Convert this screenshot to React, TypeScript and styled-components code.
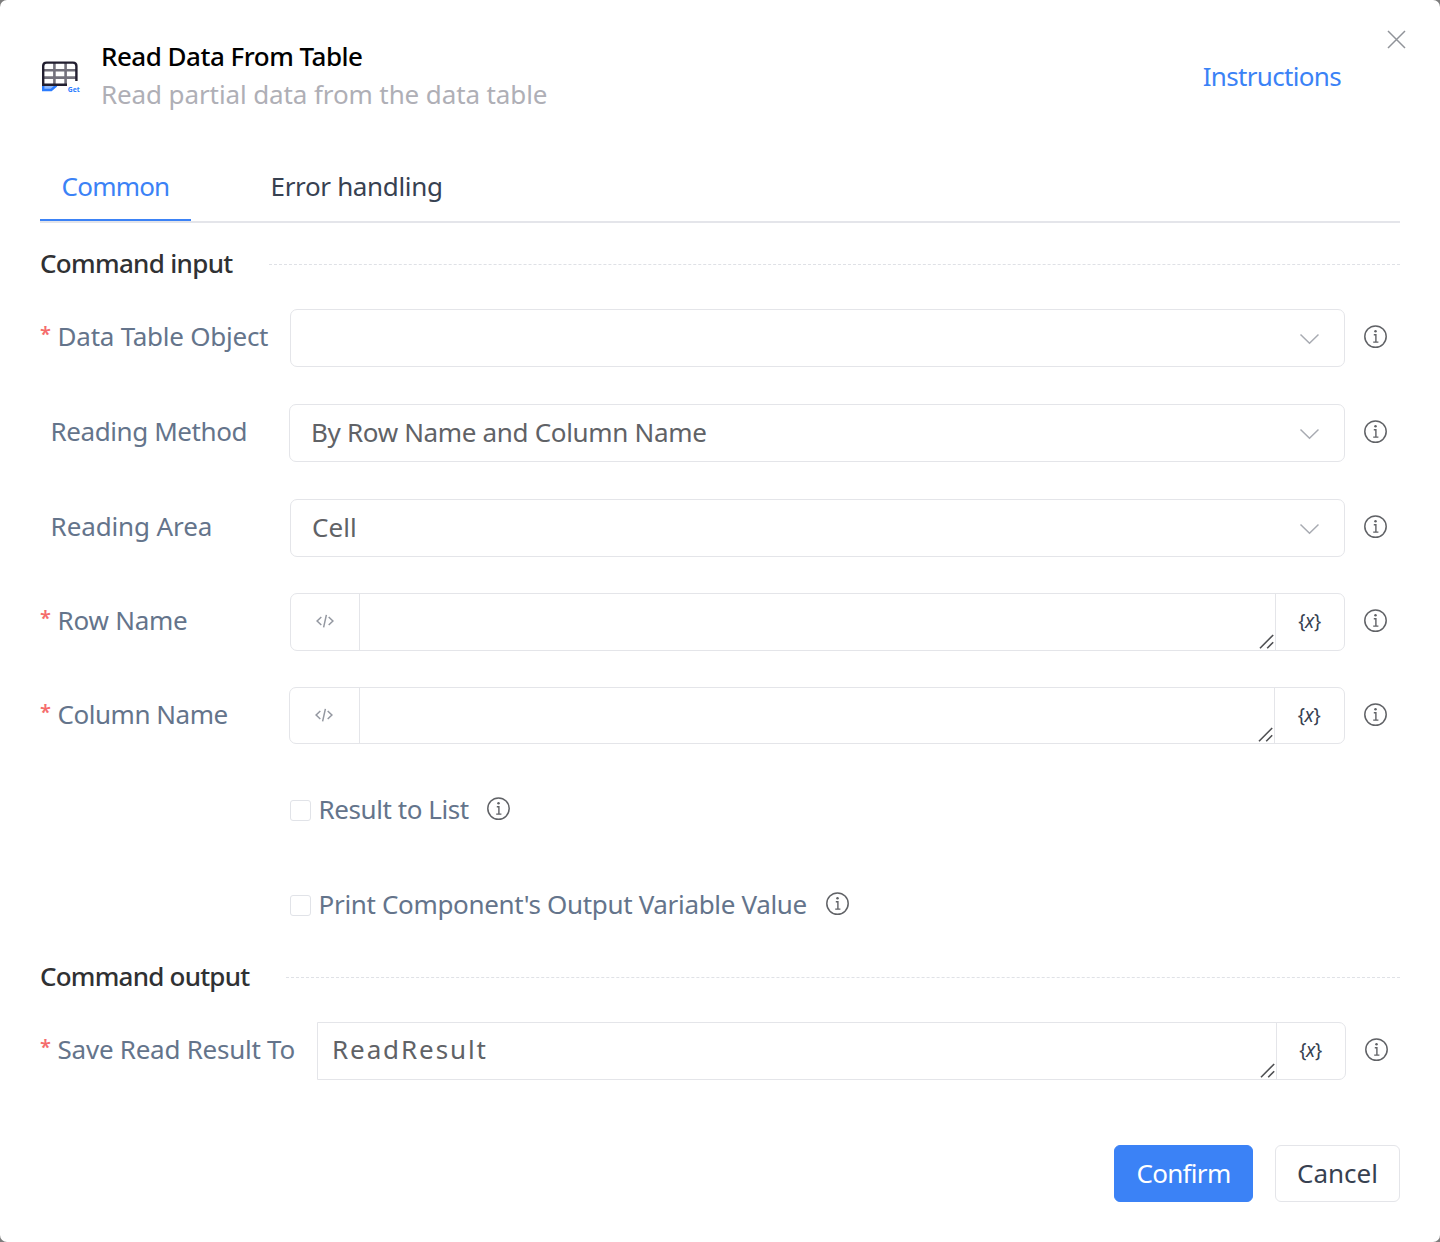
import React, { useState } from "react";
import styled, { createGlobalStyle } from "styled-components";

const GlobalStyle = createGlobalStyle`
  * { box-sizing: border-box; }
  body {
    margin: 0;
    background: #7d7d7d;
    font-family: "Noto Sans", "Open Sans", sans-serif;
    font-size: 26px;
  }
  button, textarea { font-family: inherit; font-size: inherit; }
`;

const Dialog = styled.div`
  position: relative;
  display: flex;
  flex-direction: column;
  width: 1440px;
  height: 1242px;
  padding: 37px 40px 0;
  background: #fff;
  border-radius: 7px;
`;

const Header = styled.header`
  display: flex;
  align-items: flex-start;
  height: 76px;
`;

const HeaderIcon = styled.svg`
  flex: none;
  width: 44px;
  height: 40px;
  margin: 21px 16px 0 0;
`;

const Titles = styled.div`
  flex: 1;
  padding-left: 1px;
  line-height: 38px;
`;

const Title = styled.h1`
  margin: 0;
  font-size: 26px;
  font-weight: 500;
  letter-spacing: -0.5px;
  color: #000;
`;

const Subtitle = styled.p`
  margin: 0;
  letter-spacing: -0.11px;
  color: #afafb6;
`;

const HelpLink = styled.a`
  margin: 20px 59px 0 0;
  line-height: 38px;
  letter-spacing: -0.67px;
  color: #3b82f6;
  text-decoration: none;
`;

const CloseButton = styled.button`
  position: absolute;
  top: 30px;
  right: 34px;
  display: flex;
  padding: 0;
  border: 0;
  background: none;
  color: #909399;
`;

const Tabs = styled.nav`
  display: flex;
  gap: 58px;
  height: 72px;
  margin-top: 38px;
  border-bottom: 2px solid #e4e5ea;
`;

const Tab = styled.button<{ $active?: boolean; $spacing: number }>`
  height: 70px;
  padding: 2px 21px 0 21.6px;
  border: 0;
  border-bottom: 2px solid ${(p) => (p.$active ? "#3b82f6" : "transparent")};
  background: none;
  line-height: 66px;
  letter-spacing: ${(p) => p.$spacing}px;
  color: ${(p) => (p.$active ? "#3b82f6" : "#374151")};
  min-width: 151px;
  text-align: left;
`;

const SectionHead = styled.div<{ $top: number; $titleWidth: number }>`
  display: grid;
  grid-template-columns: ${(p) => p.$titleWidth}px 1fr;
  align-items: center;
  height: 38px;
  margin: ${(p) => p.$top}px 0 27px;
`;

const SectionTitle = styled.h2<{ $spacing: number }>`
  margin: 0;
  font-size: 26px;
  font-weight: 500;
  line-height: 38px;
  letter-spacing: ${(p) => p.$spacing}px;
  color: #303133;
  white-space: nowrap;
`;

const Rule = styled.div`
  margin-top: 2px;
  border-top: 1px dashed #dfe1e6;
`;

const Row = styled.div<{ $gap?: number; $height?: number }>`
  display: flex;
  height: ${(p) => p.$height ?? 58}px;
  margin-top: ${(p) => p.$gap ?? 0}px;
`;

const Label = styled.label<{ $width: number; $indent?: number; $spacing: number }>`
  display: flex;
  flex: none;
  width: ${(p) => p.$width}px;
  padding-left: ${(p) => p.$indent ?? 0}px;
  height: 38px;
  margin-top: 8px;
  line-height: 38px;
  letter-spacing: ${(p) => p.$spacing}px;
  color: #64748b;
  white-space: nowrap;
`;

const Star = styled.span`
  flex: none;
  width: 17.6px;
  font-size: 20px;
  font-weight: 600;
  line-height: 34px;
  color: #f56c6c;
`;

const SelectBox = styled.div<{ $spacing: number }>`
  display: flex;
  flex: 1;
  align-items: center;
  justify-content: space-between;
  padding: 0 25px 2px 21px;
  border: 1px solid #e4e5e9;
  border-radius: 7px;
  letter-spacing: ${(p) => p.$spacing}px;
  color: #606266;
`;

const ChevronSvg = styled.svg`
  width: 20px;
  height: 12px;
  margin-top: 3px;
`;

const InputGroup = styled.div<{ $squareLeft?: boolean }>`
  display: flex;
  flex: 1;
  border: 1px solid #e4e5e9;
  border-radius: ${(p) => (p.$squareLeft ? "0 7px 7px 0" : "7px")};
`;

const Addon = styled.div<{ $side: "left" | "right"; $width?: number }>`
  display: flex;
  flex: none;
  align-items: center;
  justify-content: center;
  width: ${(p) => p.$width ?? 69}px;
  padding: 0 1px 2px 0;
  ${(p) => (p.$side === "left" ? "border-right" : "border-left")}: 1px solid #e4e5e9;
`;

const FieldArea = styled.div`
  position: relative;
  display: flex;
  flex: 1;
`;

const Field = styled.textarea`
  flex: 1;
  padding: 7px 14px;
  border: 0;
  outline: 0;
  resize: none;
  overflow: hidden;
  background: transparent;
  line-height: 38px;
  letter-spacing: 1.9px;
  color: #606266;
`;

const Grip = styled.svg`
  position: absolute;
  right: 1.5px;
  bottom: 1px;
  width: 15px;
  height: 15px;
`;

const Braces = styled.span`
  font-size: 19px;
  line-height: 24px;
  letter-spacing: -0.3px;
  color: #374151;
`;

const InfoSvg = styled.svg<{ $top: number }>`
  flex: none;
  width: 24px;
  height: 24px;
  margin: ${(p) => p.$top}px 0 0 19px;
`;

const InfoSpace = styled.div<{ $width: number }>`
  flex: none;
  width: ${(p) => p.$width}px;
`;

const CheckRow = styled.div<{ $gap: number }>`
  display: flex;
  height: 38px;
  margin: ${(p) => p.$gap}px 0 0 250px;
`;

const CheckBox = styled.button`
  flex: none;
  width: 21px;
  height: 21px;
  margin: 10px 7px 0 0;
  padding: 0;
  border: 1px solid #e1e3e8;
  border-radius: 3px;
  background: #fff;
`;

const CheckText = styled.span<{ $spacing: number; $width: number }>`
  width: ${(p) => p.$width}px;
  padding-left: 0.6px;
  line-height: 38px;
  letter-spacing: ${(p) => p.$spacing}px;
  color: #64748b;
  white-space: nowrap;
`;

const Footer = styled.footer`
  display: flex;
  justify-content: flex-end;
  gap: 22px;
  margin-top: 65px;
`;

const Button = styled.button<{ $primary?: boolean }>`
  width: ${(p) => (p.$primary ? 139 : 125)}px;
  height: 57px;
  padding: 0 0 1px;
  border: 1px solid ${(p) => (p.$primary ? "#3b82f6" : "#e4e5e9")};
  border-radius: 6px;
  background: ${(p) => (p.$primary ? "#3b82f6" : "#fff")};
  line-height: 54px;
  letter-spacing: ${(p) => (p.$primary ? -0.7 : 0)}px;
  color: ${(p) => (p.$primary ? "#fff" : "#374151")};
`;

const Info = ({ top }: { top: number }) => (
  <InfoSvg $top={top} viewBox="0 0 24 24" fill="none" stroke="#606266">
    <circle cx="11.5" cy="11.6" r="10.7" strokeWidth="1.5" />
    <circle cx="11.5" cy="6.2" r="1.25" fill="#606266" stroke="none" />
    <path d="M9.8 9.7H11.9V17M9.2 17.1H14.4" strokeWidth="1.4" />
  </InfoSvg>
);

const Chevron = () => (
  <ChevronSvg viewBox="0 0 20 12" fill="none" stroke="#a8abb2" strokeWidth="1.5">
    <path d="M1.5 1.5L10.5 10.3L19.5 1.5" />
  </ChevronSvg>
);

const CodeIcon = () => (
  <svg width="18" height="14" viewBox="0 0 18 14" fill="none" stroke="#9498a1" strokeWidth="1.5">
    <path d="M5.3 3L1.1 7L5.3 11M12.7 3L16.9 7L12.7 11M10.4 0.8L7.6 13.4" />
  </svg>
);

type InputProps = { value?: string; output?: boolean; rightWidth?: number; leftWidth?: number };

const VariableInput = ({ value = "", output, rightWidth = 69, leftWidth = 69 }: InputProps) => {
  const [text, setText] = useState(value);
  return (
    <InputGroup $squareLeft={output}>
      {!output && <Addon $side="left" $width={leftWidth}><CodeIcon /></Addon>}
      <FieldArea>
        <Field rows={1} value={text} onChange={(e) => setText(e.target.value)} />
        <Grip viewBox="0 0 15 15" stroke="#4f5053" strokeWidth="1.6">
          <path d="M1 14.2L14.2 1M8.2 14.2L14.2 8.2" />
        </Grip>
      </FieldArea>
      <Addon $side="right" $width={rightWidth}>
        <Braces>{"{"}<i>x</i>{"}"}</Braces>
      </Addon>
    </InputGroup>
  );
};

export default function App() {
  return (
    <>
      <GlobalStyle />
      <Dialog>
        <CloseButton aria-label="Close">
          <svg width="19" height="19" viewBox="0 0 19 19" fill="none" stroke="currentColor" strokeWidth="1.5">
            <path d="M1 1L18 18M18 1L1 18" />
          </svg>
        </CloseButton>
        <Header>
          <HeaderIcon viewBox="0 0 44 40" fill="none">
            <path d="M3.2 27.5V32H11.2L16.4 27.5" fill="#8fbaff" stroke="#2b7cff" strokeWidth="2.4" />
            <path d="M14.4 5V27M25.6 5V27M3 12.3H36M3 19.6H36" stroke="#73717c" strokeWidth="2.6" />
            <path d="M27 26.8H3.2V8Q3.2 4.6 6.6 4.6H33Q36.4 4.6 36.4 8V23" stroke="#221f30" strokeWidth="2.4" />
            <text x="27.8" y="34" fill="#2b7cff" fontFamily="Noto Sans" fontSize="6.8" fontWeight="700" textLength="12">Get</text>
          </HeaderIcon>
          <Titles>
            <Title>Read Data From Table</Title>
            <Subtitle>Read partial data from the data table</Subtitle>
          </Titles>
          <HelpLink>Instructions</HelpLink>
        </Header>

        <Tabs>
          <Tab $active $spacing={-0.8}>Common</Tab>
          <Tab $spacing={-0.35}>Error handling</Tab>
        </Tabs>

        <SectionHead $top={21} $titleWidth={229}>
          <SectionTitle $spacing={-0.68}>Command input</SectionTitle>
          <Rule />
        </SectionHead>

        <Row>
          <Label $width={250} $spacing={-0.25}><Star>*</Star>Data Table Object</Label>
          <SelectBox $spacing={0}><span /><Chevron /></SelectBox>
          <InfoSpace $width={55}><Info top={16} /></InfoSpace>
        </Row>
        <Row $gap={37}>
          <Label $width={249} $indent={10.6} $spacing={-0.42}>Reading Method</Label>
          <SelectBox $spacing={-0.33}>By Row Name and Column Name<Chevron /></SelectBox>
          <InfoSpace $width={55}><Info top={16} /></InfoSpace>
        </Row>
        <Row $gap={37}>
          <Label $width={250} $indent={10.6} $spacing={-0.12}>Reading Area</Label>
          <SelectBox $spacing={0.1}>Cell<Chevron /></SelectBox>
          <InfoSpace $width={55}><Info top={16} /></InfoSpace>
        </Row>
        <Row $gap={36}>
          <Label $width={250} $spacing={-0.26}><Star>*</Star>Row Name</Label>
          <VariableInput />
          <InfoSpace $width={55}><Info top={16} /></InfoSpace>
        </Row>
        <Row $gap={36} $height={57}>
          <Label $width={249} $spacing={-0.48}><Star>*</Star>Column Name</Label>
          <VariableInput leftWidth={70} rightWidth={70} />
          <InfoSpace $width={55}><Info top={16} /></InfoSpace>
        </Row>

        <CheckRow $gap={46}>
          <CheckBox role="checkbox" aria-checked="false" />
          <CheckText $width={150} $spacing={-0.44}>Result to List</CheckText>
          <Info top={7} />
        </CheckRow>
        <CheckRow $gap={57}>
          <CheckBox role="checkbox" aria-checked="false" />
          <CheckText $width={489} $spacing={-0.34}>Print Component's Output Variable Value</CheckText>
          <Info top={7} />
        </CheckRow>

        <SectionHead $top={34} $titleWidth={246}>
          <SectionTitle $spacing={-0.77}>Command output</SectionTitle>
          <Rule />
        </SectionHead>

        <Row>
          <Label $width={277} $spacing={-0.26}><Star>*</Star>Save Read Result To</Label>
          <VariableInput output value="ReadResult" />
          <InfoSpace $width={54}><Info top={16} /></InfoSpace>
        </Row>

        <Footer>
          <Button $primary>Confirm</Button>
          <Button>Cancel</Button>
        </Footer>
      </Dialog>
    </>
  );
}
